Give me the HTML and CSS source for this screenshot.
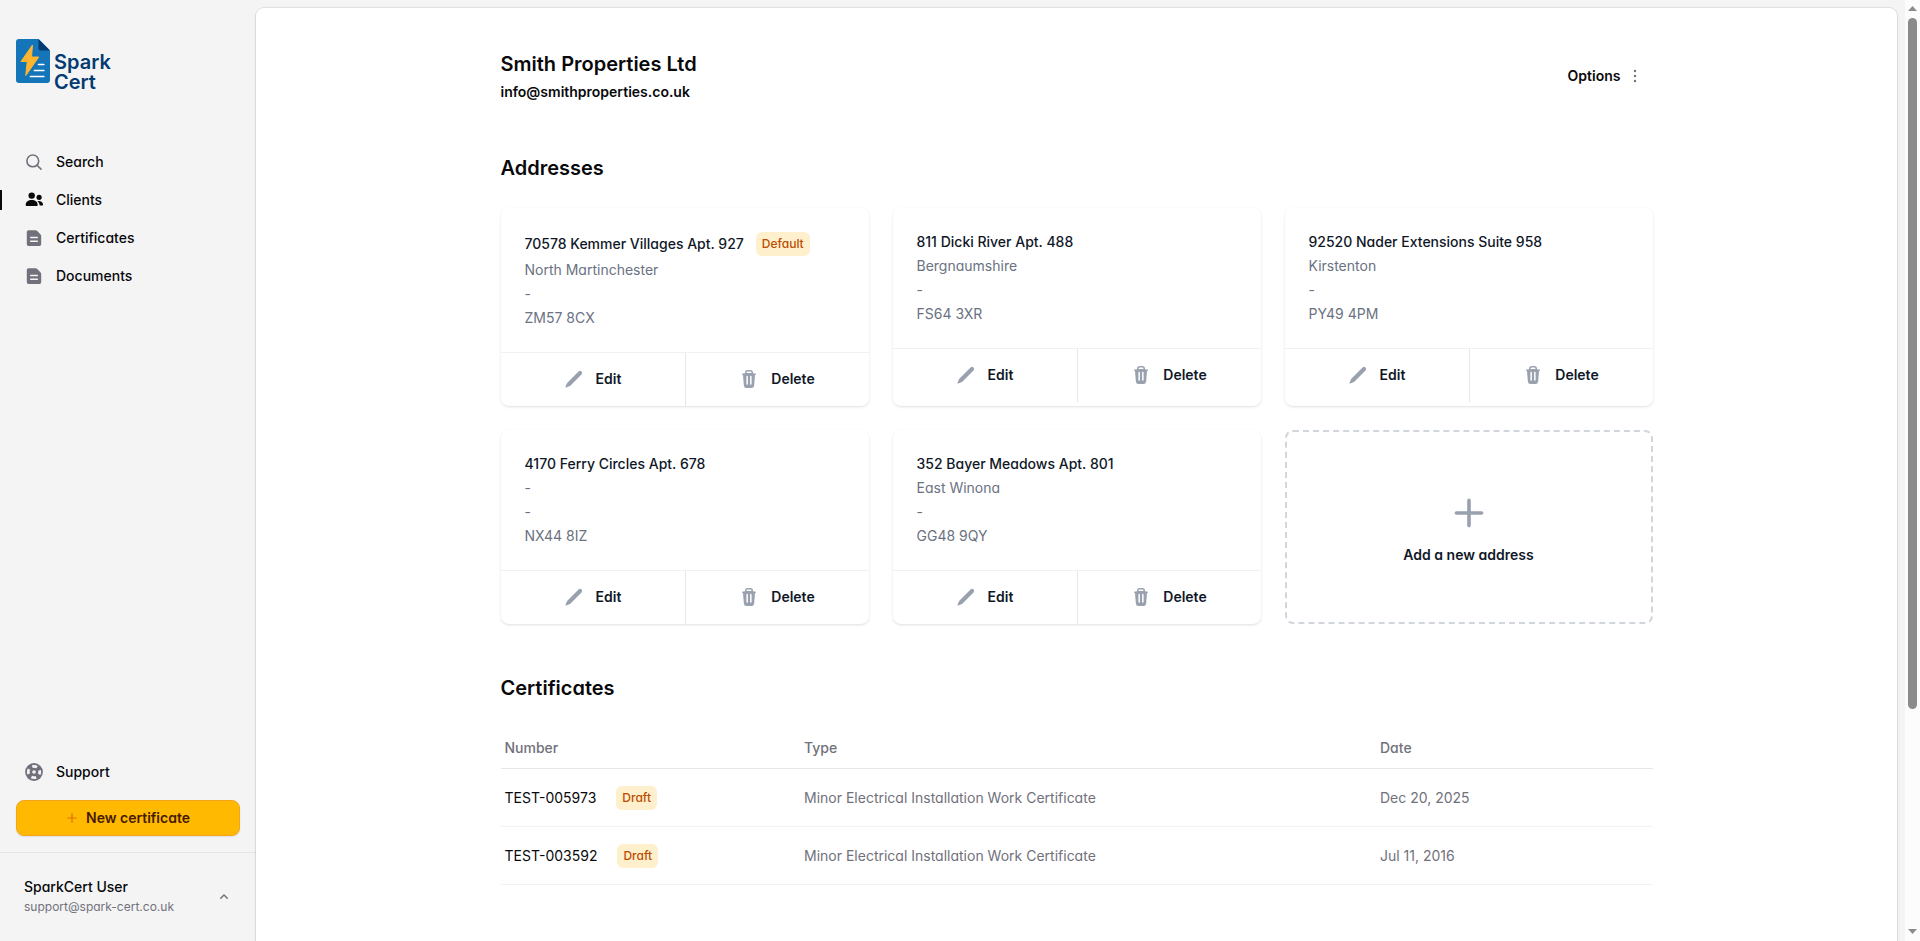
FILE: index.html
```html
<!DOCTYPE html>
<html lang="en">
<head>
<meta charset="utf-8">
<title>Smith Properties Ltd - SparkCert</title>
<link rel="stylesheet" href="styles.css">
</head>
<body>
<svg class="sprite" aria-hidden="true">
  <symbol id="i-doc" viewBox="0 0 20 20"><path fill-rule="evenodd" clip-rule="evenodd" d="M4.500 2.200A1.700 1.700 0 0 0 2.800 3.900v12.400A1.700 1.700 0 0 0 4.500 18h11a1.700 1.700 0 0 0 1.700-1.700V7.800a2 2 0 0 0-.6-1.400l-3.600-3.600a2 2 0 0 0-1.400-.6H4.500Zm2.200 6.500a.75.75 0 0 0 0 1.500h6.600a.75.75 0 0 0 0-1.500H6.700Zm0 3.900a.75.75 0 0 0 0 1.500h6.600a.75.75 0 0 0 0-1.500H6.700Z"/></symbol>
  <symbol id="i-pencil" viewBox="0 0 20 20"><path d="M2.695 14.763l-1.262 3.154a.5.5 0 0 0 .65.65l3.155-1.262a4 4 0 0 0 1.343-.885L17.500 5.500a2.121 2.121 0 0 0-3-3L3.580 13.420a4 4 0 0 0-.885 1.343z"/></symbol>
  <symbol id="i-trash" viewBox="0 0 20 20"><path fill-rule="evenodd" clip-rule="evenodd" d="M8.750 1A2.750 2.750 0 0 0 6 3.750v.443c-.795.077-1.584.176-2.365.298a.75.75 0 1 0 .23 1.482l.149-.022.841 10.518A2.750 2.750 0 0 0 7.596 19h4.807a2.750 2.750 0 0 0 2.742-2.530l.841-10.520.149.023a.75.75 0 0 0 .23-1.482A41.030 41.030 0 0 0 14 4.193V3.750A2.750 2.750 0 0 0 11.250 1h-2.500ZM10 4c.84 0 1.673.025 2.500.075V3.750c0-.69-.56-1.250-1.250-1.250h-2.500c-.69 0-1.250.56-1.250 1.250v.325C8.327 4.025 9.160 4 10 4ZM7.400 7.500v7.500a.75.75 0 0 0 1.500 0V7.500a.75.75 0 0 0-1.500 0Zm3.700 0v7.500a.75.75 0 0 0 1.500 0V7.500a.75.75 0 0 0-1.500 0Z"/></symbol>
  <symbol id="i-plus" viewBox="0 0 20 20"><path d="M10.750 4.750a.75.75 0 0 0-1.500 0v4.500h-4.500a.75.75 0 0 0 0 1.500h4.500v4.500a.75.75 0 0 0 1.500 0v-4.500h4.500a.75.75 0 0 0 0-1.500h-4.500v-4.500Z"/></symbol>
</svg>
<div class="app">
  <aside class="sidebar">
    <div class="sidebar-body">
      <a class="logo" href="#" aria-label="Spark Cert">
        <svg class="logo-mark" viewBox="0 0 34 44" aria-hidden="true">
          <path fill="#1475b9" d="M3 0h19.500L34 11.500V41a3 3 0 0 1-3 3H3a3 3 0 0 1-3-3V3a3 3 0 0 1 3-3Z"/>
          <path fill="#033b72" d="M22.500 0 34 11.500H24.500a2 2 0 0 1-2-2Z"/>
          <path stroke="#fff" stroke-width="1.700" stroke-linecap="round" d="M22.500 25.500h5.300M18.500 31.500h9.300M14.500 37.500h13.300"/>
          <path fill="#fdb52f" stroke="#fdb52f" stroke-linejoin="round" d="M16.500 6 5 22.500h6.200L9.800 36.500 22.800 18h-7.300Z"/>
        </svg>
        <span class="logo-text">Spark<br>Cert</span>
      </a>
      <nav class="nav">
        <a class="nav-item" href="#"><svg class="icon" viewBox="0 0 20 20" aria-hidden="true"><g fill="none" stroke="currentColor" stroke-width="1.600" stroke-linecap="round"><circle cx="8.800" cy="8.900" r="5.900"/><path d="m13.100 13.200 3.900 3.900"/></g></svg>Search</a>
        <a class="nav-item current" href="#" aria-current="page"><svg class="icon" viewBox="0 0 20 20" aria-hidden="true"><circle cx="7.700" cy="5.600" r="3.200"/><circle cx="15.100" cy="7.300" r="2.600"/><path d="M1.700 15c0-3.200 2.600-5 6-5s6 1.800 6 5c0 .6-.5 1.100-1.100 1.100H2.800c-.6 0-1.100-.5-1.100-1.100ZM13.400 11.200c3-.6 5.700 1 5.700 3.600 0 .4-.3.800-.7.800h-2.700c-.2-1.900-1-3.400-2.300-4.400Z"/></svg>Clients</a>
        <a class="nav-item" href="#"><svg class="icon"><use href="#i-doc"/></svg>Certificates</a>
        <a class="nav-item" href="#"><svg class="icon"><use href="#i-doc"/></svg>Documents</a>
      </nav>
      <div class="sidebar-end">
        <a class="nav-item" href="#"><svg class="icon" viewBox="0 0 20 20" aria-hidden="true"><circle cx="10" cy="10" r="8.900"/><circle cx="10" cy="10" r="5.700" fill="none" stroke="#f4f4f5" stroke-width="2.800" stroke-dasharray="5 3.953" stroke-dashoffset="2.500"/><circle cx="10" cy="10" r="1.800" fill="#f4f4f5"/></svg>Support</a>
        <button class="new-cert" type="button"><svg class="icon-sm" viewBox="0 0 16 16" aria-hidden="true"><path d="M8.600 3.750a.6.6 0 0 0-1.200 0V7.400H3.750a.6.6 0 0 0 0 1.200H7.400v3.650a.6.6 0 0 0 1.200 0V8.600h3.650a.6.6 0 0 0 0-1.200H8.600V3.750Z"/></svg>New certificate</button>
      </div>
    </div>
    <div class="sidebar-footer">
      <button class="user" type="button">
        <span class="user-info"><span class="user-name">SparkCert User</span><span class="user-mail">support@spark-cert.co.uk</span></span>
        <svg class="icon-sm" viewBox="0 0 16 16" aria-hidden="true"><path fill-rule="evenodd" clip-rule="evenodd" d="M11.780 9.780a.75.75 0 0 1-1.060 0L8 7.060 5.280 9.780a.75.75 0 0 1-1.060-1.060l3.250-3.250a.75.75 0 0 1 1.060 0l3.250 3.250a.75.75 0 0 1 0 1.060Z"/></svg>
      </button>
    </div>
  </aside>
  <main class="main">
    <div class="panel">
      <div class="content">
        <header class="page-head">
          <div><h1 class="title">Smith Properties Ltd</h1><p class="mail">info@smithproperties.co.uk</p></div>
          <button class="options" type="button">Options<svg class="icon-sm" viewBox="0 0 16 16" aria-hidden="true"><circle cx="8" cy="3" r="1.200"/><circle cx="8" cy="8" r="1.200"/><circle cx="8" cy="13" r="1.200"/></svg></button>
        </header>
        <section class="section">
          <h2 class="title">Addresses</h2>
          <div class="cards">
            <article class="card">
              <div class="card-body"><h3 class="card-title">70578 Kemmer Villages Apt. 927<span class="badge">Default</span></h3><p>North Martinchester</p><p>-</p><p>ZM57 8CX</p></div>
              <div class="card-actions"><button type="button"><svg class="icon"><use href="#i-pencil"/></svg>Edit</button><button type="button"><svg class="icon"><use href="#i-trash"/></svg>Delete</button></div>
            </article>
            <article class="card">
              <div class="card-body"><h3 class="card-title">811 Dicki River Apt. 488</h3><p>Bergnaumshire</p><p>-</p><p>FS64 3XR</p></div>
              <div class="card-actions"><button type="button"><svg class="icon"><use href="#i-pencil"/></svg>Edit</button><button type="button"><svg class="icon"><use href="#i-trash"/></svg>Delete</button></div>
            </article>
            <article class="card">
              <div class="card-body"><h3 class="card-title">92520 Nader Extensions Suite 958</h3><p>Kirstenton</p><p>-</p><p>PY49 4PM</p></div>
              <div class="card-actions"><button type="button"><svg class="icon"><use href="#i-pencil"/></svg>Edit</button><button type="button"><svg class="icon"><use href="#i-trash"/></svg>Delete</button></div>
            </article>
            <article class="card">
              <div class="card-body"><h3 class="card-title">4170 Ferry Circles Apt. 678</h3><p>-</p><p>-</p><p>NX44 8IZ</p></div>
              <div class="card-actions"><button type="button"><svg class="icon"><use href="#i-pencil"/></svg>Edit</button><button type="button"><svg class="icon"><use href="#i-trash"/></svg>Delete</button></div>
            </article>
            <article class="card">
              <div class="card-body"><h3 class="card-title">352 Bayer Meadows Apt. 801</h3><p>East Winona</p><p>-</p><p>GG48 9QY</p></div>
              <div class="card-actions"><button type="button"><svg class="icon"><use href="#i-pencil"/></svg>Edit</button><button type="button"><svg class="icon"><use href="#i-trash"/></svg>Delete</button></div>
            </article>
            <button class="add-card" type="button"><svg class="icon-lg"><use href="#i-plus"/></svg>Add a new address</button>
          </div>
        </section>
        <section class="section">
          <h2 class="title">Certificates</h2>
          <table class="table">
            <thead><tr><th class="col-number" scope="col">Number</th><th class="col-type" scope="col">Type</th><th scope="col">Date</th></tr></thead>
            <tbody>
              <tr><td><div class="number"><a href="#">TEST-005973</a><span class="badge">Draft</span></div></td><td>Minor Electrical Installation Work Certificate</td><td>Dec 20, 2025</td></tr>
              <tr><td><div class="number"><a href="#">TEST-003592</a><span class="badge">Draft</span></div></td><td>Minor Electrical Installation Work Certificate</td><td>Jul 11, 2016</td></tr>
            </tbody>
          </table>
        </section>
      </div>
    </div>
  </main>
  <div class="scrollbar" aria-hidden="true">
    <svg class="arrow" viewBox="0 0 9 5"><path d="M4.500 0 9 5H0Z"/></svg>
    <div class="track"><div class="thumb"></div></div>
    <svg class="arrow" viewBox="0 0 9 5"><path d="M0 0h9L4.500 5Z"/></svg>
  </div>
</div>
</body>
</html>
```
FILE: styles.css
```css
*, *::before { box-sizing: border-box; margin: 0; padding: 0; }
body {
  background: #f4f4f5;
  color: #09090b;
  font: 400 14px/20px Inter, "Liberation Sans", sans-serif;
  font-feature-settings: "cv11";
}
a { color: inherit; text-decoration: none; }
button { border: 0; background: none; color: inherit; font: inherit; font-feature-settings: inherit; cursor: pointer; }
svg { display: block; flex: none; fill: currentColor; }
.sprite { display: none; }
.icon { width: 20px; height: 20px; }
.icon-sm { width: 16px; height: 16px; }
.icon-lg { width: 48px; height: 48px; }

.app { display: flex; height: 100vh; overflow: hidden; }

.sidebar { display: flex; flex-direction: column; flex: none; width: 256px; }
.sidebar-body { display: flex; flex-direction: column; flex: 1; padding: 39px 16px 16px; }
.logo { display: flex; align-items: flex-end; gap: 4px; height: 53px; color: #033b72; }
.logo-mark { width: 34px; height: 44px; align-self: flex-start; }
.logo-text { font-size: 20px; line-height: 20px; font-weight: 600; font-feature-settings: normal; }
.nav { display: flex; flex-direction: column; gap: 2px; margin-top: 52px; }
.nav-item { position: relative; display: flex; align-items: center; gap: 12px; padding: 8px; font-weight: 500; }
.nav-item .icon { color: #71717b; }
.nav-item.current .icon { color: #09090b; }
.nav-item.current::before { content: ""; position: absolute; left: -16px; top: 8px; width: 2px; height: 20px; background: #09090b; }
.sidebar-end { display: flex; flex-direction: column; gap: 10px; margin-top: auto; }
.new-cert {
  display: flex; align-items: center; justify-content: center; gap: 6px;
  height: 36px; padding-right: 2px; border: 1px solid #f5a51c; border-radius: 8px;
  background: #ffb900; color: #461901; font-weight: 600;
  box-shadow: 0 1px 2px rgb(0 0 0 / 8%);
}
.new-cert .icon-sm { color: #e17100; }
.sidebar-footer { padding: 16px; border-top: 1px solid #e6e6e7; }
.user { display: flex; align-items: center; justify-content: space-between; width: 100%; padding: 8px; text-align: left; }
.user-info { display: flex; flex-direction: column; }
.user-name { font-weight: 500; }
.user-mail { font-size: 12px; color: #71717b; }
.user .icon-sm { color: #71717b; }

.main { flex: 1; min-width: 0; padding: 8px 8px 0 0; }
.panel {
  min-height: 100vh; padding: 40px; border-radius: 8px; background: #fff;
  box-shadow: 0 0 0 1px rgb(9 9 11 / 7%), 0 1px 3px rgb(0 0 0 / 10%);
}
.content { max-width: 1152px; margin: 0 auto; }
.page-head { display: flex; align-items: center; justify-content: space-between; }
.title { font-size: 20px; line-height: 32px; font-weight: 600; }
.mail { line-height: 24px; font-weight: 600; }
.options { display: flex; align-items: center; gap: 6px; padding: 8px 10px; font-weight: 600; }
.options .icon-sm { color: #71717b; }
.section { margin-top: 48px; }

.cards { display: grid; grid-template-columns: repeat(3, 1fr); gap: 24px; margin-top: 24px; }
.card { border-radius: 8px; background: #fff; box-shadow: 0 1px 3px rgb(0 0 0 / 10%), 0 1px 2px -1px rgb(0 0 0 / 10%); }
.card-body { display: flex; flex-direction: column; gap: 4px; padding: 24px; color: #6a7282; }
.card-title { display: flex; align-items: center; gap: 12px; font-size: 14px; font-weight: 500; color: #101828; }
.badge { padding: 2px 6px; border-radius: 6px; background: #fef0cd; color: #bb4d00; font-size: 12px; line-height: 20px; font-weight: 500; }
.card-actions { display: grid; grid-template-columns: 1fr 1fr; border-top: 1px solid #f0f1f3; }
.card-actions button { display: flex; align-items: center; justify-content: center; gap: 12px; height: 53px; padding-bottom: 2px; font-weight: 600; color: #101828; }
.card-actions button + button { border-left: 1px solid #e5e7eb; }
.card-actions .icon { color: #99a1af; }
.add-card {
  display: flex; flex-direction: column; align-items: center; justify-content: center; gap: 8px;
  border: 2px dashed #d1d5dc; border-radius: 8px; font-weight: 600; color: #101828;
}
.add-card .icon-lg { color: #99a1af; }

.table { width: 100%; margin-top: 24px; border-collapse: collapse; table-layout: fixed; color: #71717b; }
.table th { padding: 10px 4px; border-bottom: 1px solid #e6e6e7; font-weight: 500; text-align: left; }
.table td { height: 58px; padding: 16px 4px; border-bottom: 1px solid #f3f3f4; }
.col-number { width: 26%; }
.col-type { width: 50%; }
.number { display: flex; align-items: center; gap: 20px; color: #09090b; }

.scrollbar { display: flex; flex-direction: column; align-items: center; flex: none; width: 15px; padding: 6px 0 7px; background: #fcfcfc; color: #8b8b8b; }
.arrow { width: 9px; height: 5px; }
.track { flex: 1; width: 9px; padding: 7px 0; }
.thumb { height: 76.4%; border-radius: 5px; background: #8b8b8b; }
```
